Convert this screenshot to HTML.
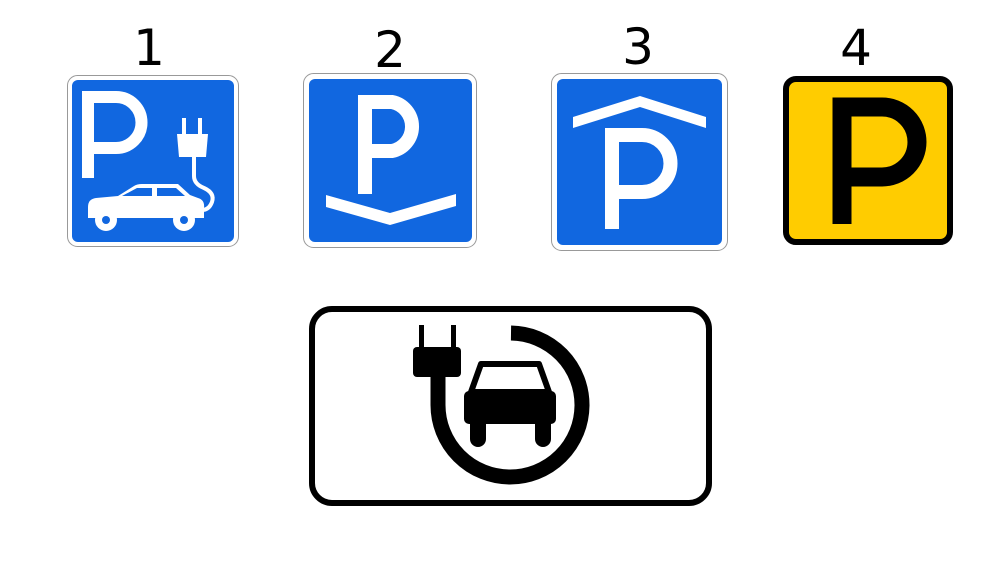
<!DOCTYPE html>
<html><head><style>html,body{margin:0;padding:0;background:#fff;width:1000px;height:562px;overflow:hidden}</style></head>
<body>
<svg width="1000" height="562" viewBox="0 0 1000 562" xmlns="http://www.w3.org/2000/svg">
<g font-family="DejaVu Sans, Liberation Sans, sans-serif" font-size="50" text-anchor="middle" fill="#000">
<text x="149" y="65">1</text><text x="390" y="67">2</text><text x="638" y="64">3</text><text x="856" y="65">4</text>
</g>
<!-- sign 1 -->
<rect x="67.5" y="75.5" width="171" height="171" rx="10" fill="#fff" stroke="#999"/>
<rect x="72" y="80" width="162" height="162" rx="6" fill="#1167e0"/>
<path d="M88,178 V97 H116 A25.5,25.5 0 0 1 116,148 H88" fill="none" stroke="#fff" stroke-width="12"/>
<rect x="182" y="118" width="4" height="18" fill="#fff"/><rect x="198" y="118" width="4" height="18" fill="#fff"/>
<path d="M177,134 H208 L206,157 H179 Z" fill="#fff"/>
<path d="M194,156 V176 Q194,184 204,188 Q215,193 212,202 Q209,210 202,210" fill="none" stroke="#fff" stroke-width="4"/>
<path d="M88,207 Q88,199 96,198 L118,196 L134,186 Q137,184 142,184 H178 L190,195 L198,198 Q205,200 204,208 V218 H88 Z" fill="#fff"/>
<path d="M122,196 L137,188 H152 V196 Z M157,188 H176 L185,196 H157 Z" fill="#1167e0"/>
<circle cx="106" cy="220" r="11" fill="#fff"/><circle cx="106" cy="220" r="4" fill="#1167e0"/>
<circle cx="184" cy="220" r="11" fill="#fff"/><circle cx="184" cy="220" r="4" fill="#1167e0"/>
<!-- sign 2 -->
<rect x="303.5" y="73.5" width="173" height="174" rx="10" fill="#fff" stroke="#999"/>
<rect x="309" y="79" width="163" height="163" rx="6" fill="#1167e0"/>
<path d="M365,194 V102 H392 A25,25 0 0 1 392,151 H365" fill="none" stroke="#fff" stroke-width="14"/>
<path d="M326,195 L390,213 L456,194 V206 L390,225 L326,207 Z" fill="#fff"/>
<!-- sign 3 -->
<rect x="551.5" y="73.5" width="176" height="177" rx="10" fill="#fff" stroke="#999"/>
<rect x="557" y="79" width="165" height="166" rx="6" fill="#1167e0"/>
<path d="M573,117 L640,96 L706,117 V128 L640,107 L573,128 Z" fill="#fff"/>
<path d="M612,229 V135 H642 A28.5,28.5 0 0 1 642,192 H612" fill="none" stroke="#fff" stroke-width="14"/>
<!-- sign 4 -->
<rect x="786" y="79" width="164" height="163" rx="10" fill="#ffcc00" stroke="#000" stroke-width="6"/>
<path d="M842,224 V107 H882 A35,35 0 0 1 882,177 H842" fill="none" stroke="#000" stroke-width="19"/>
<!-- bottom sign -->
<rect x="312" y="309" width="397" height="194" rx="20" fill="#fff" stroke="#000" stroke-width="6"/>
<rect x="419" y="325" width="5" height="25" fill="#000"/><rect x="451" y="325" width="5" height="25" fill="#000"/>
<rect x="413" y="347" width="48" height="30" rx="4" fill="#000"/>
<path d="M511,333 A72,72 0 1 1 438,405 L438,372" fill="none" stroke="#000" stroke-width="15"/>
<path d="M481,364 H539 L549,392 H471 Z" fill="none" stroke="#000" stroke-width="6" stroke-linejoin="round"/>
<rect x="464" y="391" width="92" height="33" rx="5" fill="#000"/>
<path d="M470,422 H486 V439 A8,8 0 0 1 470,439 Z M535,422 H551 V439 A8,8 0 0 1 535,439 Z" fill="#000"/>
</svg>
</body></html>
